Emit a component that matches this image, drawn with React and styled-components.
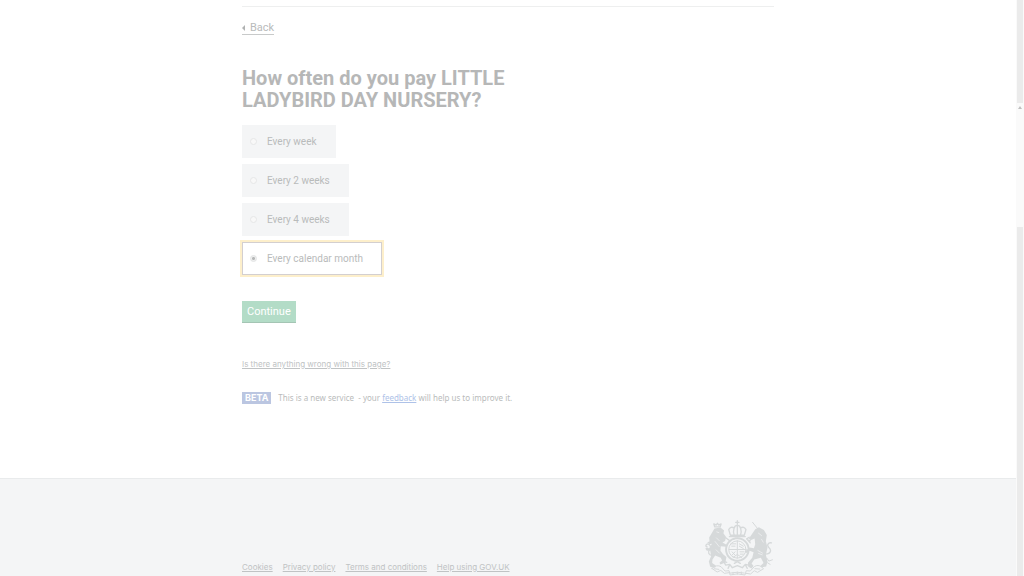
import React, { useState } from "react";
import styled, { createGlobalStyle } from "styled-components";

const GlobalStyle = createGlobalStyle`
  * { box-sizing: border-box; }
  body {
    margin: 0;
    background: #fff;
    color: #b9bbbb;
    font-family: Roboto, "Noto Sans", sans-serif;
    font-size: 11px;
    line-height: 14px;
  }
`;

const Screen = styled.div`
  display: flex;
  height: 100vh;
  overflow: hidden;
`;

const Page = styled.div`
  flex: 1;
  min-width: 0;
  display: flex;
  flex-direction: column;
`;

const Container = styled.div`
  width: 100%;
  max-width: 564px;
  margin: 0 auto;
  padding: 0 16px;
`;

const Main = styled.main`
  flex: 1 0 auto;
  padding: 6px 0 72px;
`;

const Rule = styled.hr`
  margin: 0 0 14px;
  border: 0;
  border-top: 1px solid #eeefef;
`;

const BackLink = styled.a`
  display: flex;
  width: fit-content;
  align-items: center;
  gap: 4px;
  color: #b9bbbb;
  line-height: 13px;
  text-decoration: none;
  border-bottom: 1px solid #c8caca;
`;

const Heading = styled.h1`
  max-width: 320px;
  margin: 32px 0 14px;
  font-size: 20px;
  line-height: 22px;
  font-weight: 700;
  color: #b6b7b7;
`;

const Options = styled.fieldset`
  display: flex;
  flex-direction: column;
  align-items: flex-start;
  gap: 6px;
  margin: 0;
  padding: 0;
  border: 0;
`;

const Option = styled.label`
  display: flex;
  align-items: center;
  gap: 10px;
  height: 33px;
  padding: 0 19px 0 8px;
  font-size: 10px;
  background: ${(p) => (p.$selected ? "#fff" : "#f4f5f6")};
  box-shadow: ${(p) => (p.$selected ? "inset 0 0 0 1px #d3cfd0, 0 0 0 2px #fdefcb" : "none")};
`;

const Radio = styled.input`
  appearance: none;
  width: 7px;
  height: 7px;
  margin: 0;
  border: 1px solid #e6e7e7;
  border-radius: 50%;
  background: #f8f8f8;
  outline: none;
  &:checked {
    border-color: #e2e3e3;
    background: radial-gradient(circle, #b5b7b7 0 1px, #efefef 2px);
  }
`;

const ContinueButton = styled.button`
  display: block;
  margin: 26px 0 35px;
  padding: 4px 5px;
  border: 0;
  background: #b3dcc7;
  box-shadow: inset 0 -1px #a4c5b4;
  color: #fff;
  font: inherit;
`;

const SmallLink = styled.a`
  color: ${(p) => (p.$accent ? "#aec2e8" : "#c0c3c4")};
  font-family: Inter, Roboto, sans-serif;
  font-size: 8px;
  line-height: 12px;
`;

const Report = styled.div`
  line-height: 12px;
`;

const Phase = styled.p`
  display: flex;
  align-items: center;
  gap: 7px;
  margin: 22px 0 0;
  font-family: "Noto Sans", sans-serif;
  font-size: 8px;
  line-height: 12px;

  ${SmallLink} {
    font-family: inherit;
  }
`;

const Badge = styled.strong`
  padding: 0 3px;
  background: #bbc6e1;
  color: #fff;
  font-family: Inter, Roboto, sans-serif;
  font-size: 9px;
`;

const Footer = styled.footer`
  flex: none;
  padding-top: 41px;
  border-top: 1px solid #e9ebec;
  background: #f4f5f6;
`;

const FooterRow = styled(Container)`
  display: flex;
  justify-content: space-between;
  align-items: flex-end;
`;

const FooterLinks = styled.nav`
  display: flex;
  gap: 10px;
  padding-bottom: 3px;
`;

const Crest = styled.svg`
  display: block;
  width: 70px;
  height: 56px;
`;

const ScrollTrack = styled.div`
  flex: none;
  width: 8px;
  display: flex;
  flex-direction: column;
  background: #fafafa;
`;

const TrackPart = styled.div`
  flex: ${(p) => p.$grow} 0 0;
  margin: 0 1px;
  background: ${(p) => (p.$light ? "transparent" : "#ebebeb")};
`;

const UpMark = styled.svg`
  display: block;
  width: 4px;
  height: 3px;
  margin: 3px auto 0;
`;

const choices = ["Every week", "Every 2 weeks", "Every 4 weeks", "Every calendar month"];
const footerLinks = ["Cookies", "Privacy policy", "Terms and conditions", "Help using GOV.UK"];

function RoyalCrest() {
  return (
    <Crest viewBox="45 29 210 169" role="img" aria-label="Royal coat of arms" fill="none" stroke="#d6d9da" strokeWidth="4" strokeLinecap="round" strokeLinejoin="round">
      <path d="M145 31v11M140 36h10" />
      <path d="M124 75l-5-17q5-11 17-5 1-8 9-8t9 8q12-6 17 5l-5 17zM135 54q-3 11 0 19M145 47v26M155 54q3 11 0 19M121 79h48" />
      <circle cx="145" cy="118" r="34" strokeWidth="6" strokeDasharray="5 2" />
      <circle cx="145" cy="118" r="26" strokeWidth="3" />
      <path d="M145 92v52M120 118h50M126 101h14M128 108h10M151 101l12 7M151 108l12 7M129 125l9 10M138 125l-9 10M153 125h12M154 132h9M132 142l13-9 13 9" strokeWidth="3" />
      <path fill="#d6d9da" stroke="none" d="M76 55l18-3 11 9-2 8 8 11-3 12-8 5 15 8-4 5-16-2-1 14 8 10 10 9-3 16-15 6-3-5 8-7-4-8-17-7-8 12-1 11 11 7-2 7-15-3-4-16 7-16-3-17-10 1-5-7 6-2 7 2 7-14-7 1-7-6 7-2-1-12z" />
      <path d="M77 50l-3-9 7 3 4-5 4 5 7-3-3 9zM71 136c-13 0-16-10-10-18 5-7 3-15-5-17-8 1-7 10-2 9M111 83l10 8M101 153l12 4" />
      <path d="M83 65l6 2M82 83l8 8M78 94l12 15M81 119l10 10" stroke="#f4f5f6" strokeWidth="2" />
      <path d="M207 56l-16-20" strokeWidth="3" />
      <path fill="#d6d9da" stroke="none" d="M199 57l11-6 15 8 9 15-3 19 5 20-5 21 5 20-4 15-14 3-3-5 9-8-8-16-20 5-8 12 6 8-6 7-10-5-1-12 13-15 4-17-12-4-11 7-3-5 14-12 13 2 4-12-2-17-12 5-5-5z" />
      <path d="M230 132c18-1 18-13 10-20-7-7-2-16 8-14M184 98l-11-12 8-5M184 92l-5-2M202 87l14 6M202 98l18 1" />
      <path d="M209 69l9 7M218 87l5 9M207 121l14 8M209 130l11 4" stroke="#f4f5f6" strokeWidth="2" />
      <path strokeWidth="3" d="M68 175q15-13 28-5l12 13 12-1 3 13q22-7 45 0l4-13 12 1 13-14q14-8 27 7l-18 11-10-5-11 10-14-2M68 175l16 11 11-5 11 9 14-2" />
      <path strokeWidth="3" d="M75 176l14 2M198 176l15 1M124 189q20-5 42 0M132 187v7M145 186v7M157 186v7" />
      <path d="M103 153l7 12 12-2 8 10 15-6 15 6 9-10 10 2 7-11M122 164l-5 11M169 164l6 11M136 160l9-5 9 5" />
      <path d="M224 150l10-6 6 9 11-4M236 158l8 5" strokeWidth="3" />
    </Crest>
  );
}

export default function App() {
  const [selected, setSelected] = useState("Every calendar month");
  return (
    <>
      <GlobalStyle />
      <Screen>
        <Page>
          <Main>
            <Container>
              <Rule />
              <BackLink href="#back">
                <svg width="4" height="6" viewBox="0 0 4 6" aria-hidden="true"><path d="M0 3l3-3v6z" fill="#b0b2b2" /></svg>
                Back
              </BackLink>
              <Heading id="question">How often do you pay LITTLE LADYBIRD DAY NURSERY?</Heading>
              <Options aria-labelledby="question">
                {choices.map((choice) => (
                  <Option key={choice} $selected={choice === selected}>
                    <Radio type="radio" name="frequency" checked={choice === selected} onChange={() => setSelected(choice)} />
                    {choice}
                  </Option>
                ))}
              </Options>
              <ContinueButton type="button">Continue</ContinueButton>
              <Report>
                <SmallLink href="#problem">Is there anything wrong with this page?</SmallLink>
              </Report>
              <Phase>
                <Badge>BETA</Badge>
                <span>This is a new service&nbsp; - your <SmallLink $accent href="#feedback">feedback</SmallLink> will help us to improve it.</span>
              </Phase>
            </Container>
          </Main>
          <Footer>
            <FooterRow>
              <FooterLinks aria-label="Footer">
                {footerLinks.map((text) => <SmallLink key={text} href="#footer">{text}</SmallLink>)}
              </FooterLinks>
              <RoyalCrest />
            </FooterRow>
          </Footer>
        </Page>
        <ScrollTrack aria-hidden="true">
          <TrackPart $grow={103} />
          <TrackPart $grow={124} $light>
            <UpMark viewBox="0 0 4 3"><path d="M2 0l2 3H0z" fill="#bfbfbf" /></UpMark>
          </TrackPart>
          <TrackPart $grow={349} />
        </ScrollTrack>
      </Screen>
    </>
  );
}
